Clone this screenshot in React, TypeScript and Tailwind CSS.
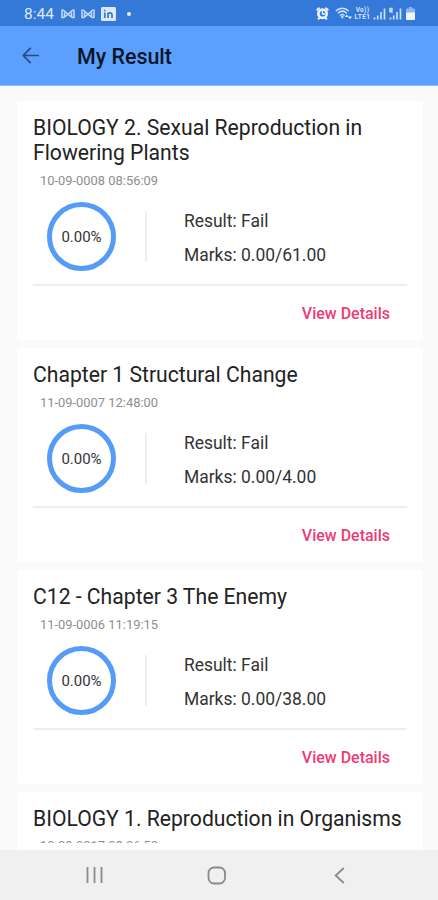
import React from 'react';

interface Result {
  title: string[];
  date: string;
  percent: string;
  result: string;
  marks: string;
}

const results: Result[] = [
  { title: ['BIOLOGY 2. Sexual Reproduction in', 'Flowering Plants'], date: '10-09-0008 08:56:09', percent: '0.00%', result: 'Fail', marks: '0.00/61.00' },
  { title: ['Chapter 1 Structural Change'], date: '11-09-0007 12:48:00', percent: '0.00%', result: 'Fail', marks: '0.00/4.00' },
  { title: ['C12 - Chapter 3 The Enemy'], date: '11-09-0006 11:19:15', percent: '0.00%', result: 'Fail', marks: '0.00/38.00' },
];

const MailIcon = () => (
  <svg width="14" height="10" viewBox="0 0 14 10" fill="none" stroke="#c4dbf9" strokeWidth="1.5">
    <path d="M3.500 8.500H1V1.200h1.500L7 5.200l4.500-4H13v7.300h-2.500M3.500 8.500V3.500M10.500 8.500V3.500M4 7.800L7 5.200l3 2.600" />
  </svg>
);

const LinkedInIcon = () => (
  <svg width="15" height="14" viewBox="0 0 15 14">
    <rect width="15" height="14" rx="1.500" fill="#dceafd" />
    <path d="M3.800 5.500V11M3.800 2.700v1.600M7 11V5.500M7 7.800c0-2.400 4-2.700 4 0V11" fill="none" stroke="#3579d8" strokeWidth="1.700" />
  </svg>
);

const AlarmIcon = () => (
  <svg width="13" height="13" viewBox="0 0 13 13">
    <path d="M.6 3.200L3.600.8M12.400 3.200L9.400.8M2 12.500l2-2M11 12.500l-2-2" stroke="#eaf3ff" strokeWidth="1.800" />
    <circle cx="6.500" cy="6.700" r="4.200" fill="#3579d8" stroke="#eaf3ff" strokeWidth="2.600" />
    <path d="M6.500 4v3h2.500" fill="none" stroke="#eaf3ff" strokeWidth="1.300" />
  </svg>
);

const WifiIcon = () => (
  <svg width="17" height="13" viewBox="0 0 17 13" fill="none" stroke="#c9dffb" strokeWidth="1.500">
    <path d="M.8 4C4.500.2 10 .2 13.700 4M2.800 6.300c2.800-2.700 6.200-2.700 9 0M5 8.500c1.500-1.300 3-1.300 4.500 0" />
    <path d="M5.500 9.200h3.500L7.200 12z" fill="#c9dffb" stroke="none" />
    <path d="M9.800 10L11.800 7.500l1.700 2.500zM12.900 9.500L15 12.300l1.900-2.800z" fill="#eaf3ff" stroke="none" />
  </svg>
);

const SignalIcon = ({ roaming }: { roaming?: boolean }) => (
  <svg width="13" height="13" viewBox="0 0 13 13" fill="none" stroke="#c9dffb" strokeWidth="1.700">
    <path d="M1.500 12.500v-2M4.700 12.500v-4M8 12.500V5M11.500 12.500V1.500" />
    {roaming && <path d="M1 5.500v-4h2v2H1l2.500 2.200" strokeWidth="1.400" />}
  </svg>
);

const BatteryIcon = () => (
  <svg width="9" height="13" viewBox="0 0 9 13">
    <path d="M3 0h3v1.500h2q1 0 1 1V12q0 1-1 1H1q-1 0-1-1V2.500q0-1 1-1h2z" fill="#8db7ef" />
    <path d="M0 5.500h9V12q0 1-1 1H1q-1 0-1-1z" fill="#eef5ff" />
  </svg>
);

const StatusBar = () => (
  <div className="flex h-[26px] shrink-0 items-center bg-[#3579d8] pl-6 pr-[23px] pt-px">
    <span className="w-[31px] whitespace-nowrap pt-[2px] text-[15.5px] leading-none text-[#dceafd]">8:44</span>
    <div className="ml-[6px] flex items-center gap-[6px]">
      <MailIcon />
      <MailIcon />
      <LinkedInIcon />
    </div>
    <span className="ml-[11px] h-[4px] w-[4px] rounded-full bg-[#e4effe]"></span>
    <div className="ml-auto flex items-center">
      <AlarmIcon />
      <span className="ml-[6px]"><WifiIcon /></span>
      <span className="ml-[2px] flex w-[17px] flex-col items-center text-[6.5px] font-bold leading-[7px] text-[#d6e6fc]">
        <span className="tracking-[0.3px]">Vo))</span>
        <span className="tracking-[0.4px]">LTE1</span>
      </span>
      <span className="ml-[2px]"><SignalIcon /></span>
      <span className="ml-[3px]"><SignalIcon roaming /></span>
      <span className="ml-[4px]"><BatteryIcon /></span>
    </div>
  </div>
);

const Header = () => (
  <header className="flex h-[60px] shrink-0 items-center border-b border-[#8dbaf8] bg-[#5b9fff] pl-[22px]">
    <svg width="18" height="17" viewBox="0 0 18 17" fill="none" stroke="#27497d" strokeWidth="1.700">
      <path d="M8.700.8L1.300 8.500l7.400 7.700M1.300 8.500H17" />
    </svg>
    <h1 className="ml-[37px] mt-[3px] text-[21.4px] font-medium leading-none text-[#0b1626]">My Result</h1>
  </header>
);

const ResultCard: React.FC<{ item: Result }> = ({ item }) => (
  <div className="shrink-0 rounded-[3px] bg-white px-4 pt-[14px]">
    <h2 className="whitespace-nowrap text-[21.15px] leading-[25px] text-[#222]">
      {item.title.map((line) => (
        <span key={line} className="block">{line}</span>
      ))}
    </h2>
    <p className="pl-[7px] pt-[8px] text-[12.9px] leading-4 text-[#8e8e8e]">{item.date}</p>
    <div className="mt-[13px] flex h-[69px] items-center">
      <div className="ml-[14px] flex h-[69px] w-[69px] items-center justify-center rounded-full border-[5px] border-[#559bf8] pt-[2px] text-[15px] text-[#333]">
        {item.percent}
      </div>
      <div className="ml-[29px] h-[51px] w-[2px] bg-[#efefef]"></div>
      <div className="ml-[37px] flex flex-col gap-[10px] pt-[2px] text-[17.45px] leading-6 text-[#333]">
        <span>Result: {item.result}</span>
        <span>Marks: {item.marks}</span>
      </div>
    </div>
    <div className="mt-[13px] h-[2px] bg-[#eeeeee]"></div>
    <div className="flex h-[54px] items-center justify-end pr-[17px] pt-[2px]">
      <button className="text-[16px] font-medium leading-5 text-[#f03a74]">View Details</button>
    </div>
  </div>
);

const NavBar = () => (
  <nav className="flex h-[50px] shrink-0 items-center bg-[#f0f0f0] pl-[86px]">
    <svg width="17" height="16" viewBox="0 0 17 16" stroke="#8a8a8a" strokeWidth="1.800">
      <path d="M1.500 0v16M8.500 0v16M15.500 0v16" />
    </svg>
    <svg className="ml-[104px]" width="20" height="19" viewBox="0 0 20 19" fill="none" stroke="#8a8a8a" strokeWidth="1.800">
      <rect x="1.500" y="1.500" width="16.500" height="16" rx="5.500" />
    </svg>
    <svg className="ml-[107px]" width="11" height="17" viewBox="0 0 11 17" fill="none" stroke="#8a8a8a" strokeWidth="1.800">
      <path d="M9.800 1L1.700 8.500l8.100 7.500" />
    </svg>
  </nav>
);

export default function App() {
  return (
    <div className="flex h-[900px] w-[438px] flex-col overflow-hidden bg-[#fafafa] font-[Roboto,sans-serif]">
      <StatusBar />
      <Header />
      <main className="flex min-h-0 flex-1 flex-col gap-2 overflow-hidden pl-[17px] pr-[15px] pt-[15px]">
        {results.map((item) => (
          <ResultCard key={item.title[0]} item={item} />
        ))}
        {/* Last card is cut off by the end of the list */}
        <div className="h-[60px] shrink-0 rounded-t-[3px] bg-white px-4 pt-[14px]">
          <h2 className="whitespace-nowrap text-[21.15px] leading-[25px] text-[#222]">BIOLOGY 1. Reproduction in Organisms</h2>
          <div className="h-[12px] overflow-hidden">
            <p className="pl-[7px] pt-[7px] text-[12.9px] leading-4 text-[#8e8e8e]">10-09-0017 08:06:50</p>
          </div>
        </div>
      </main>
      <NavBar />
    </div>
  );
}
